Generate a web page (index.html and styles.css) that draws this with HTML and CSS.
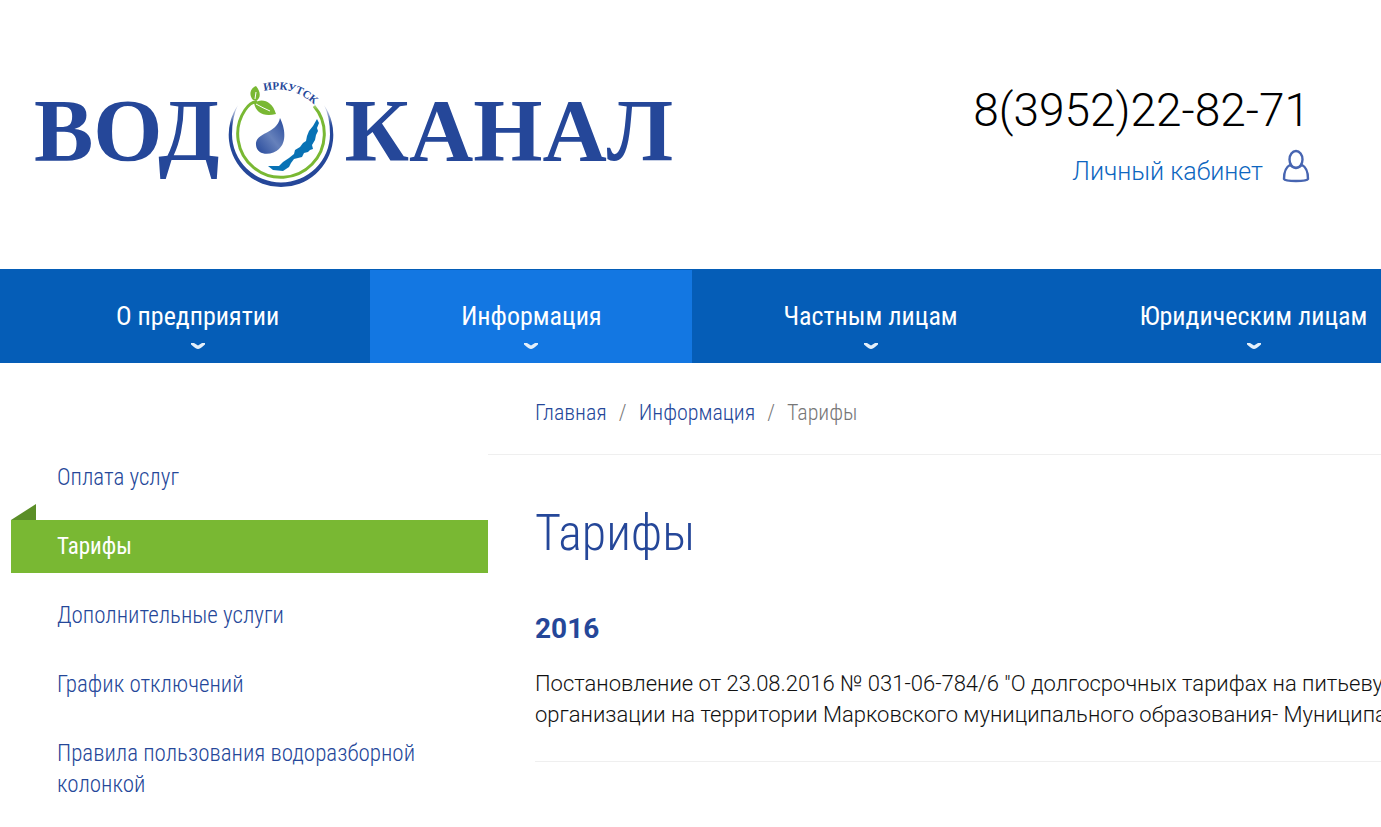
FILE: index.html
```html
<!DOCTYPE html>
<html lang="ru">
<head>
<meta charset="utf-8">
<title>Тарифы</title>
<link rel="stylesheet" href="styles.css">
</head>
<body>
<header class="header">
  <a class="logo" href="#" aria-label="Водоканал Иркутск">
    <svg width="640" height="110" viewBox="34 79 640 110">
      <defs>
        <linearGradient id="drop" x1="0" y1="1" x2="1" y2="0">
          <stop offset="0" stop-color="#24479a"/>
          <stop offset=".5" stop-color="#6681bb"/>
          <stop offset="1" stop-color="#27499b"/>
        </linearGradient>
        <linearGradient id="ring" x1="0" y1="0" x2="0" y2="1">
          <stop offset="0" stop-color="#254799" stop-opacity=".1"/>
          <stop offset=".25" stop-color="#254799"/>
        </linearGradient>
        <linearGradient id="stem" x1="1" y1="0" x2=".9" y2=".4">
          <stop offset="0" stop-color="#79b833" stop-opacity=".1"/>
          <stop offset=".3" stop-color="#79b833"/>
        </linearGradient>
        <path id="arc" d="M264 91Q293 84 317 107"/>
      </defs>
      <text class="logo-word" x="34" y="160">ВОД</text>
      <text class="logo-word" x="673" y="160" text-anchor="end">КАНАЛ</text>
      <text class="logo-city"><textPath href="#arc">ИРКУТСК</textPath></text>
      <path fill="url(#ring)" d="M238 105A52.300 52.300 0 1 0 324 105Q330 117 330 134A49 48.500 0 0 1 232 134Q232 117 238 105Z"/>
      <path fill="none" stroke="url(#stem)" stroke-width="3" d="M257 102Q251 101 245 110A43.300 43.300 0 1 0 314 106"/>
      <path fill="#79b833" d="M253 100C248 94 251 88 256 86C261 92 261 98 256 101ZM254 103C261 98 272 100 276 114C264 117 256 113 254 103Z"/>
      <path fill="none" stroke="#fff" d="M255 99L256 92M256 104Q263 108 270 111"/>
      <path fill="url(#drop)" d="M280 118C285 128 287 142 279 149C272 156 257 156 256 145C255 132 277 134 280 118Z"/>
      <path fill="#0872b5" d="M317 119L319 123L317 128L318 131L316 135L315 140L312 145L313 149L310 150L308 152L304 153L302 157L298 158L294 159L291 163L289 167L283 171L273 170L268 166L279 166L283 162L289 158L294 154L295 150L300 147L303 143L306 141L307 136L309 131L313 126Z"/>
    </svg>
  </a>
  <div class="contacts">
    <div class="phone">8(3952)22-82-71</div>
    <a class="account" href="#">
      <span>Личный кабинет</span>
      <svg width="28" height="34" viewBox="0 0 28 34" fill="none" stroke="#4765b1" stroke-width="2.400">
        <ellipse cx="14" cy="10.500" rx="6.500" ry="8.500"/>
        <path d="M8 16Q2 19 2 30Q3 32 14 32Q25 32 26 30Q26 19 20 16Q14 22 8 16Z"/>
      </svg>
    </a>
  </div>
</header>
<nav class="nav">
  <a class="nav-item" href="#">О предприятии<svg class="chevron" viewBox="0 0 14 6"><path d="M0 0H3L7 2.500L11 0H14V1.500Q9 6 7 6Q5 6 0 1.500Z"/></svg></a>
  <a class="nav-item nav-item-active" href="#">Информация<svg class="chevron" viewBox="0 0 14 6"><path d="M0 0H3L7 2.500L11 0H14V1.500Q9 6 7 6Q5 6 0 1.500Z"/></svg></a>
  <a class="nav-item" href="#">Частным лицам<svg class="chevron" viewBox="0 0 14 6"><path d="M0 0H3L7 2.500L11 0H14V1.500Q9 6 7 6Q5 6 0 1.500Z"/></svg></a>
  <a class="nav-item" href="#">Юридическим лицам<svg class="chevron" viewBox="0 0 14 6"><path d="M0 0H3L7 2.500L11 0H14V1.500Q9 6 7 6Q5 6 0 1.500Z"/></svg></a>
</nav>
<div class="columns">
  <aside class="sidebar">
    <a class="side-item" href="#">Оплата услуг</a>
    <a class="side-item side-item-active" href="#">Тарифы</a>
    <a class="side-item" href="#">Дополнительные услуги</a>
    <a class="side-item" href="#">График отключений</a>
    <a class="side-item" href="#">Правила пользования водоразборной колонкой</a>
  </aside>
  <main class="content">
    <div class="crumbs">
      <a href="#">Главная</a><span>/</span><a href="#">Информация</a><span>/</span><span>Тарифы</span>
    </div>
    <article class="article">
      <h1 class="title">Тарифы</h1>
      <h2 class="year">2016</h2>
      <p class="text">Постановление от 23.08.2016 № 031-06-784/6 "О долгосрочных тарифах на питьевую<br>организации на территории Марковского муниципального образования- Муниципального</p>
    </article>
  </main>
</div>
</body>
</html>
```

FILE: styles.css
```css
* { box-sizing: border-box; }
body {
  margin: 0;
  background: #fff;
  color: #111;
  font: 300 22px/31px Roboto, sans-serif;
  overflow-x: hidden;
}
a { color: #254799; text-decoration: none; }

.header {
  display: flex;
  justify-content: space-between;
  align-items: flex-start;
  padding: 79px 71px 80px 34px;
}
.logo svg { display: block; }
.logo-word {
  font: 700 89px "Liberation Serif", serif;
  fill: #254799;
}
.logo-city {
  font: 700 11px "Liberation Serif", serif;
  fill: #254799;
}
.contacts { text-align: right; }
.phone {
  color: #000;
  font-size: 46px;
  line-height: 62px;
}
.account {
  display: flex;
  justify-content: flex-end;
  align-items: flex-start;
  gap: 19px;
  padding-top: 8px;
  color: #0d66c0;
  font-size: 25px;
}
.account span { padding-top: 7px; }

.nav {
  display: flex;
  padding: 1px 0 0 25px;
  background: #055db7;
  overflow: hidden;
}
.nav-item {
  display: flex;
  flex: none;
  flex-direction: column;
  align-items: center;
  gap: 10px;
  padding: 30px 91px 14px;
  color: #fff;
  font: 400 26px/33px "Roboto Condensed", Roboto, sans-serif;
}
.nav-item-active { background: #1377e2; }
.chevron {
  width: 14px;
  height: 6px;
  fill: #e4effa;
}

.columns {
  display: grid;
  grid-template-columns: 477px minmax(0, 1fr);
  padding-left: 11px;
}
.sidebar {
  display: flex;
  flex-direction: column;
  gap: 16px;
  padding-top: 88px;
}
.side-item {
  padding: 11px 46px;
  font: 300 23px/31px "Roboto Condensed", Roboto, sans-serif;
}
.side-item-active {
  position: relative;
  background: #79b833;
  color: #fff;
  font-weight: 400;
}
.side-item-active::before {
  content: "";
  position: absolute;
  left: 0;
  bottom: 100%;
  width: 25px;
  height: 16px;
  background: #5b8e27;
  clip-path: polygon(0 100%, 100% 0, 100% 100%);
}

.content { overflow: hidden; }
.crumbs {
  display: flex;
  gap: 12px;
  padding: 34px 47px 26px;
  border-bottom: 1px solid #efefef;
  color: #777;
  font: 300 22px/31px "Roboto Condensed", Roboto, sans-serif;
}
.article { padding: 45px 0 0 47px; }
.title {
  margin: 0;
  color: #254799;
  font: 300 50px/66px "Roboto Condensed", Roboto, sans-serif;
}
.year {
  margin: 47px 0 23px;
  color: #254799;
  font-weight: 700;
  font-size: 28px;
  line-height: 32px;
}
.text {
  margin: 0;
  padding-bottom: 31px;
  border-bottom: 1px solid #efefef;
  white-space: nowrap;
}
```
